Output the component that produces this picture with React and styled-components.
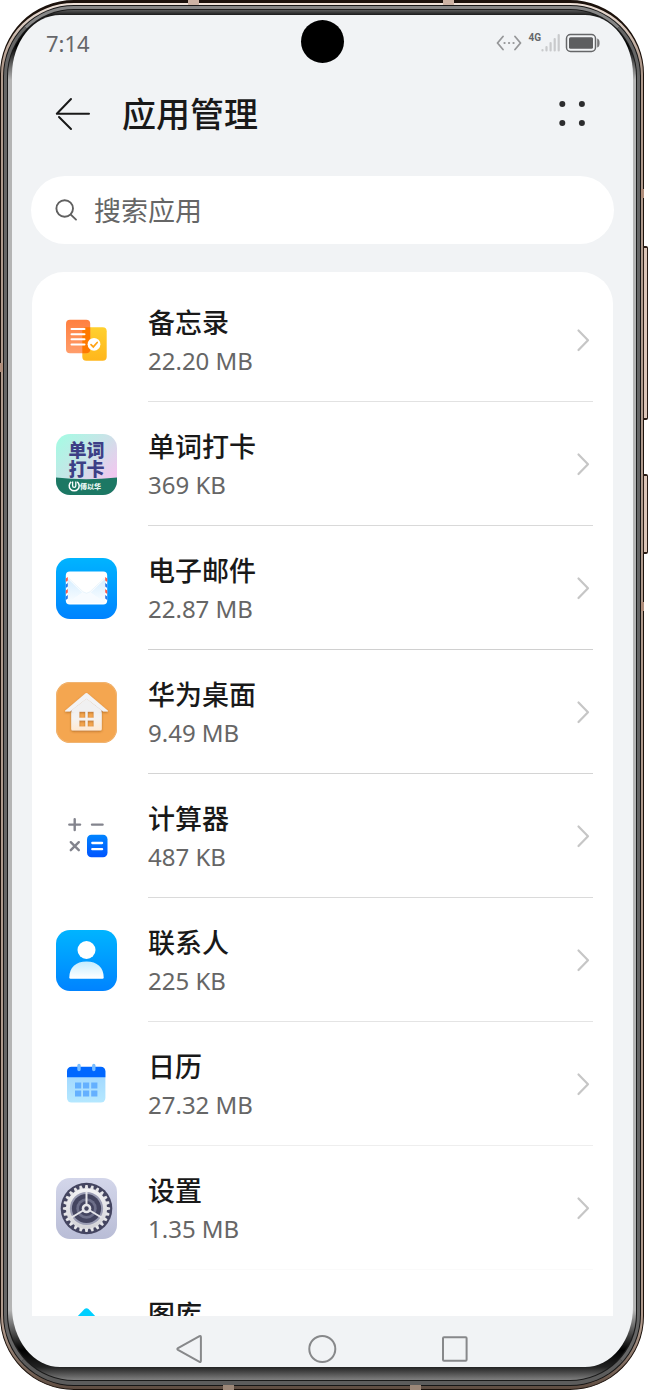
import React, {useState} from 'react'
import styled, {createGlobalStyle} from 'styled-components'

const teeth = Array.from({length: 24}, (_, i) => i * 15);

const MemoIcon = () => (
  <AppSvg viewBox="0 0 61 61" aria-hidden="true">
    <defs>
      <linearGradient id="memoOrange" x1="0" y1="0" x2="0" y2="1">
        <stop offset="0" stopColor="#ff7f3f"/><stop offset="1" stopColor="#ff9d6b"/>
      </linearGradient>
      <linearGradient id="memoYellow" x1="0" y1="0" x2="0" y2="1">
        <stop offset="0" stopColor="#ffd02e"/><stop offset="1" stopColor="#ffb61c"/>
      </linearGradient>
    </defs>
    <rect x="26.3" y="17.3" width="24.4" height="33.4" rx="4" fill="url(#memoYellow)"/>
    <rect x="10" y="9.8" width="24.2" height="33.4" rx="4" fill="url(#memoOrange)"/>
    <path d="M26.3 21.3a4 4 0 0 1 4-4h3.9v21.9a4 4 0 0 1-4 4h-3.9z" fill="#ff7900"/>
    <path d="M15.5 19h13M15.5 24.2h13M15.5 29.2h13M15.5 34.4h13" stroke="#fff" strokeWidth="2" strokeLinecap="round"/>
    <circle cx="38" cy="34.3" r="6.4" fill="#fff"/>
    <path d="M35 34.6l2.3 2.3 3.9-4.4" fill="none" stroke="#ffa314" strokeWidth="1.7" strokeLinecap="round"/>
  </AppSvg>
)

const WordIcon = () => (
  <AppSvg viewBox="0 0 61 61" aria-hidden="true">
    <defs>
      <linearGradient id="wordBg" x1="0" y1="0" x2="1" y2="0.9">
        <stop offset="0" stopColor="#a2fde3"/><stop offset="0.5" stopColor="#cbe2e8"/><stop offset="0.85" stopColor="#f0c8ef"/>
      </linearGradient>
      <clipPath id="wordClip"><rect width="61" height="61" rx="14"/></clipPath>
    </defs>
    <g clipPath="url(#wordClip)">
      <rect width="61" height="61" fill="url(#wordBg)"/>
      <path d="M0 43.5Q30 47 61 43.5V61H0z" fill="#1c7864"/>
      <WordText x="30.5" y="22.500" $size={18}>单词</WordText>
      <WordText x="30.5" y="41.500" $size={18}>打卡</WordText>
      <path d="M15.2 47.8a5 5 0 1 0 6 0" fill="none" stroke="#fff" strokeWidth="1.5"/>
      <path d="M16.6 47.5v4.2a1.6 1.6 0 0 0 3.2 0v-4.2" fill="none" stroke="#fff" strokeWidth="1.3"/>
      <WordText x="34.5" y="55" $size={7} $light>傅以华</WordText>
    </g>
  </AppSvg>
)

const MailIcon = () => (
  <AppSvg viewBox="0 0 61 61" aria-hidden="true">
    <defs>
      <linearGradient id="mailBg" x1="0" y1="0" x2="0" y2="1">
        <stop offset="0" stopColor="#00b4ff"/><stop offset="1" stopColor="#0083ff"/>
      </linearGradient>
      <linearGradient id="mailSide" x1="0" y1="0" x2="0" y2="1">
        <stop offset="0" stopColor="#d5edff"/><stop offset="1" stopColor="#fafdff"/>
      </linearGradient>
    </defs>
    <rect width="61" height="61" rx="14" fill="url(#mailBg)"/>
    <rect x="9.8" y="13.5" width="41.4" height="33" rx="4" fill="#fff"/>
    <path d="M11 20l15.5 14.5L12 45zM50 20L34.5 34.5 49 45z" fill="url(#mailSide)"/>
    <path d="M12 45l15-11h7l15 11z" fill="#f7fbff"/>
    <path d="M11 17.5l16 16.3q3.5 2.8 7 0l16-16.3V15H11z" fill="#fff"/>
    <path d="M12.5 20l14.5 13.8q3.5 2.8 7 0L48.5 20" fill="none" stroke="#dceefa" strokeWidth="0.6"/>
    <path d="M9.8 20.5l2-1.5v3.500l-2 1.500zM9.800 32.500l2-1.500v3.500l-2 1.500zM51.200 20.500l-2-1.500v3.500l2 1.500zM51.200 32.500l-2-1.500v3.500l2 1.500z" fill="#fa5a4c"/>
    <path d="M9.800 26.500l2-1.500v3.500l-2 1.500zM9.800 38.500l2-1.500v3.500l-2 1.500zM51.200 26.500l-2-1.500v3.500l2 1.500zM51.200 38.500l-2-1.500v3.500l2 1.500z" fill="#2878e8"/>
  </AppSvg>
)

const HomeIcon = () => (
  <AppSvg viewBox="0 0 61 61" aria-hidden="true">
    <defs>
      <linearGradient id="homeFace" x1="0" y1="0" x2="0" y2="1">
        <stop offset="0" stopColor="#eeeeef"/><stop offset="0.5" stopColor="#f4f2f1"/><stop offset="1" stopColor="#ffe9d2"/>
      </linearGradient>
      <filter id="homeShade" x="-20%" y="-20%" width="140%" height="150%">
        <feDropShadow dx="0" dy="1" stdDeviation="0.8" floodColor="#8a4a10" floodOpacity="0.6"/>
      </filter>
    </defs>
    <rect width="61" height="61" rx="14" fill="#f4a650"/>
    <rect x="0.5" y="0.5" width="60" height="60" rx="13.5" fill="none" stroke="#f0b472"/>
    <path filter="url(#homeShade)" fill="url(#homeFace)" fillRule="evenodd" d="M15.2 24h30.600v23a1.500 1.500 0 0 1-1.500 1.500H16.700a1.500 1.500 0 0 1-1.500-1.500zM23.300 29.800v6h6v-6zM31.700 29.800v6h6v-6zM23.300 38.500v6h6v-6zM31.700 38.500v6h6v-6z"/>
    <path filter="url(#homeShade)" fill="#f3f3f4" d="M29.600 11.300q.9-.8 1.800 0L52 28.700q.5.800-.5.800h-4.300L30.500 16.800 14 29.500H9.500q-1 0-.5-.8z"/>
    <path fill="#f0f0f1" d="M30.500 16.500L16 28v2h7v-1h15v1h7v-2z"/>
  </AppSvg>
)

const CalculatorIcon = () => (
  <AppSvg viewBox="0 0 61 61" aria-hidden="true">
    <defs>
      <linearGradient id="calcKey" x1="0" y1="0" x2="0" y2="1">
        <stop offset="0" stopColor="#0084ff"/><stop offset="1" stopColor="#0054ff"/>
      </linearGradient>
    </defs>
    <path d="M18.7 13.2v10.8M13.3 18.6h10.8M36 18.6h10.6M14.8 36.200l8 8M22.800 36.200l-8 8" stroke="#83848d" strokeWidth="2.4" strokeLinecap="round"/>
    <rect x="31" y="28.8" width="20.5" height="22.4" rx="4.5" fill="url(#calcKey)"/>
    <path d="M36.3 37h9.8M36.3 43.2h9.8" stroke="#fff" strokeWidth="2.3" strokeLinecap="round"/>
  </AppSvg>
)

const ContactsIcon = () => (
  <AppSvg viewBox="0 0 61 61" aria-hidden="true">
    <defs>
      <linearGradient id="contactBody" x1="0" y1="0" x2="0" y2="1">
        <stop offset="0" stopColor="#c4ecff"/><stop offset="1" stopColor="#fff"/>
      </linearGradient>
      <linearGradient id="contactBg" x1="0" y1="0" x2="0" y2="1">
        <stop offset="0" stopColor="#00b4ff"/><stop offset="1" stopColor="#0083ff"/>
      </linearGradient>
    </defs>
    <rect width="61" height="61" rx="14" fill="url(#contactBg)"/>
    <circle cx="30.5" cy="20" r="9" fill="#fff"/>
    <path d="M13.3 47.5c0-10 6.500-16 17.200-16s17.200 6 17.200 16q0 1.200-1.200 1.200h-32q-1.200 0-1.200-1.200z" fill="url(#contactBody)"/>
  </AppSvg>
)

const CalendarIcon = () => (
  <AppSvg viewBox="0 0 61 61" aria-hidden="true">
    <defs>
      <linearGradient id="calPage" x1="0" y1="0" x2="0" y2="1">
        <stop offset="0" stopColor="#9cd3ff"/><stop offset="1" stopColor="#b5e8ff"/>
      </linearGradient>
    </defs>
    <rect x="11" y="13" width="38.4" height="35.5" rx="4.5" fill="url(#calPage)"/>
    <path d="M11 23.3v-6a4.500 4.500 0 0 1 4.500-4.500h29.400a4.500 4.500 0 0 1 4.500 4.500v6z" fill="#0067ff"/>
    <path d="M23 11.500v4M37.800 11.500v4" stroke="#79bdff" strokeWidth="3.4" strokeLinecap="round"/>
    <path d="M19 28.500h6.200v6H19zM27 28.500h6.200v6H27zM35.200 28.500h6.200v6h-6.200zM19 36.500h6.200v6H19zM27 36.500h6.200v6H27zM35.200 36.500h6.200v6h-6.200z" fill="#64b0ff"/>
  </AppSvg>
)

const SettingsIcon = () => (
  <AppSvg viewBox="0 0 61 61" aria-hidden="true">
    <defs>
      <linearGradient id="setBg" x1="0" y1="0" x2="0" y2="1">
        <stop offset="0" stopColor="#d3d6ea"/><stop offset="1" stopColor="#b9bdd6"/>
      </linearGradient>
      <linearGradient id="setGear" x1="0" y1="0" x2="0" y2="1">
        <stop offset="0" stopColor="#f4f4f6"/><stop offset="1" stopColor="#d2d2d6"/>
      </linearGradient>
    </defs>
    <rect width="61" height="61" rx="14" fill="url(#setBg)"/>
    <g transform="translate(30.5 30.5)">
      <circle r="25.8" fill="#444560"/>
      <circle r="20.6" fill="url(#setGear)"/>
      {teeth.map((angle) => (
        <path key={angle} d="M-1.8-20L-1.1-23.6H1.1L1.8-20z" fill="#e6e6e9" transform={`rotate(${angle})`}/>
      ))}
      <circle r="16.6" fill="#9a9cb3"/>
      <circle r="14.6" fill="#444560"/>
      <circle r="10.2" fill="#6d6f89"/>
      <circle r="7.5" fill="#444560"/>
      <path d="M0-17V0M0 0l-15 9M0 0l15 9" stroke="#e5e5e9" strokeWidth="2"/>
      <circle r="4.8" fill="#e5e5e9"/>
      <circle r="2.2" fill="#444560"/>
    </g>
  </AppSvg>
)

const GalleryIcon = () => (
  <AppSvg viewBox="0 0 61 61" aria-hidden="true">
    <path d="M28.500 7q2-1.700 4 0l9 9.500-11 11-11-11z" fill="#00cfff"/>
    <path d="M44 19.500l9 9q2 2 0 4l-9 9-11-11z" fill="#0a84ff"/>
    <path d="M17 19.500l-9 9q-2 2 0 4l9 9 11-11z" fill="#ffc423"/>
    <path d="M30.500 33.500l11 11-9 9q-2 2-4 0l-9-9z" fill="#ff5c4d"/>
  </AppSvg>
)

const apps = [
  {name: '备忘录', size: '22.20 MB', Icon: MemoIcon, line: '#e2e2e2'},
  {name: '单词打卡', size: '369 KB', Icon: WordIcon, line: '#d9d9d9'},
  {name: '电子邮件', size: '22.87 MB', Icon: MailIcon, line: '#d0d0d0'},
  {name: '华为桌面', size: '9.49 MB', Icon: HomeIcon, line: '#d4d4d4'},
  {name: '计算器', size: '487 KB', Icon: CalculatorIcon, line: '#dadada'},
  {name: '联系人', size: '225 KB', Icon: ContactsIcon, line: '#e4e4e4'},
  {name: '日历', size: '27.32 MB', Icon: CalendarIcon, line: '#eeeeee'},
  {name: '设置', size: '1.35 MB', Icon: SettingsIcon, line: '#fafafa'},
  {name: '图库', size: '', Icon: GalleryIcon, line: '#ffffff'},
];

const StatusIcons = () => (
  <StatusGroup>
    <svg width="26" height="18" viewBox="0 0 26 18" fill="none" stroke="#969799" strokeWidth="1.8" strokeLinecap="round" strokeLinejoin="round" aria-hidden="true">
      <path d="M7 2.500L1.500 9 7 15.500M19 2.500L24.500 9 19 15.500"/>
      <path d="M8.500 9h.1M13 9h.1M17.500 9h.1" strokeWidth="2.2"/>
    </svg>
    <Network>4G</Network>
    <svg width="20" height="20" viewBox="0 0 20 20" stroke="#c9cacc" strokeWidth="2.2" strokeLinecap="round" aria-hidden="true">
      <path d="M1.500 17v.5M5.500 14v3.500M9.600 10v7.500M13.700 6v11.500M17.700 2v15.500"/>
    </svg>
    <Battery width="36" height="20" viewBox="0 0 36 20" aria-hidden="true">
      <rect x="1.500" y="1.500" width="29" height="17" rx="4" fill="none" stroke="#656668" strokeWidth="1.5"/>
      <rect x="4" y="4.300" width="24" height="11.400" rx="1.500" fill="#5d5e60"/>
      <path d="M32.200 5.500q2.400.5 2.400 4.500t-2.400 4.500z" fill="#77787a"/>
    </Battery>
  </StatusGroup>
)

const App = () => {
  const [query, setQuery] = useState('');
  const shown = apps.filter((app) => app.name.includes(query.trim()));

  return (
    <>
    <GlobalStyle/>
      <Phone>
        <Shell>
          <Rim>
            <Band>
              <Glass>
                <Screen>
                  <Camera/>
                  <StatusBar>
                    <span>7:14</span>
                    <StatusIcons/>
                  </StatusBar>
                  <Header>
                    <IconButton aria-label="返回">
                      <svg width="36" height="36" viewBox="0 0 36 36" fill="none" stroke="#191919" strokeWidth="2" strokeLinecap="round" strokeLinejoin="round" aria-hidden="true">
                        <path d="M16 3L1.800 17.800H34M4 21L16 33"/>
                      </svg>
                    </IconButton>
                    <h1>应用管理</h1>
                    <IconButton aria-label="更多">
                      <svg width="36" height="36" viewBox="0 0 36 36" fill="#2c2c2e" aria-hidden="true">
                        <circle cx="8.300" cy="8" r="3"/><circle cx="27.900" cy="8" r="3"/>
                        <circle cx="8.300" cy="27" r="3"/><circle cx="27.900" cy="27" r="3"/>
                      </svg>
                    </IconButton>
                  </Header>
                  <Search>
                    <svg width="24" height="24" viewBox="0 0 24 24" fill="none" stroke="#606060" strokeWidth="1.900" strokeLinecap="round" aria-hidden="true">
                      <circle cx="9.700" cy="10.500" r="8.300"/><path d="M15.800 16.600l5.200 5"/>
                    </svg>
                    <input aria-label="搜索应用" placeholder="搜索应用" value={query} onChange={(e)=> setQuery(e.target.value)}/>
                  </Search>
                  <List>
                    {shown.map(({name, size, Icon, line}) => (
                      <li key={name}>
                        <Row href={`#${name}`}>
                          <Icon/>
                          <RowBody $line={line}>
                            <RowText>
                              <h2>{name}</h2>
                              <p>{size}</p>
                            </RowText>
                            <svg width="16" height="24" viewBox="0 0 16 24" fill="none" stroke="#c6c6c6" strokeWidth="2.200" strokeLinecap="round" strokeLinejoin="round" aria-hidden="true">
                              <path d="M3.500 2.500L13 12.200 3.500 22"/>
                            </svg>
                          </RowBody>
                        </Row>
                      </li>
                    ))}
                  </List>
                  <NavBar>
                    <NavButton aria-label="后退">
                      <svg width="30" height="30" viewBox="0 0 30 30"><path d="M3 14.200Q1.700 15 3 15.800L24.500 27.800q1.400.6 1.400-1V3.200q0-1.600-1.400-1z"/></svg>
                    </NavButton>
                    <NavButton aria-label="主屏幕">
                      <svg width="30" height="30" viewBox="0 0 30 30"><circle cx="14.300" cy="15" r="13"/></svg>
                    </NavButton>
                    <NavButton aria-label="最近任务">
                      <svg width="30" height="30" viewBox="0 0 30 30"><rect x="2" y="3.200" width="23.600" height="23.600" rx="1"/></svg>
                    </NavButton>
                  </NavBar>
                </Screen>
              </Glass>
            </Band>
          </Rim>
        </Shell>
        <SideKey $top={246} $height={174}/>
        <SideKey $top={474} $height={80}/>
        <Antenna style={{top: 0, left: '29%'}} $wide/>
        <Antenna style={{top: 0, right: '30%'}} $wide/>
        <Antenna style={{bottom: 0, right: '35%'}} $wide $dark/>
        <Antenna style={{bottom: 0, left: '34.4%'}} $wide $dark/>
        <Antenna style={{top: 363, left: 0}}/>
        <Antenna style={{top: 189, right: 4}}/>
        <Antenna style={{top: 602, right: 4}}/>
      </Phone>
    </>
  )
}

const GlobalStyle = createGlobalStyle`
  *{
    box-sizing: border-box;
  }
  body{
    margin: 0;
    background: white;
    font-family: 'Noto Sans', 'Noto Sans CJK SC', sans-serif;
    color: #191919;
  }
  h1, h2, p, ul{
    margin: 0;
    padding: 0;
  }
  button{
    padding: 0;
    border: none;
    background: none;
    cursor: pointer;
  }
  svg{
    display: block;
    flex-shrink: 0;
  }
`
const Phone = styled.main`
  position: relative;
  height: 100vh;
  padding-right: 4px;
`
/* the metal edge, drawn as nested rounded layers */
const Shell = styled.div`
  height: 100%;
  padding: 2px 2px 3px;
  border: 1px solid #1c120c;
  border-top-width: 3px;
  border-radius: 74px;
  background: linear-gradient(#efe2d9, #b09a8c 60px, #b09a8c calc(100% - 60px), #5e4c41);
`
const Rim = styled.div`
  height: 100%;
  padding: 1px;
  border-radius: 71px;
  background: #161616;
`
const Band = styled.div`
  height: 100%;
  border-style: solid;
  border-width: 3px 3px 4px;
  border-color: #868686 #666 #5c5c5c;
  border-radius: 70px;
  background: #1a1a1a;
  padding: 1px;
`
const Glass = styled.div`
  height: 100%;
  padding: 5px 3px 13px 4px;
  border-radius: 66px;
  background: linear-gradient(#5a5a5a, #1a1a1a 5px, #000 36px, #b4b4b4 70px, #b4b4b4 calc(100% - 70px), #000 calc(100% - 30px), #222 calc(100% - 13px), #808080);
`
const Screen = styled.div`
  position: relative;
  display: flex;
  flex-direction: column;
  height: 100%;
  overflow: hidden;
  border-radius: 48px / 60px;
  background: #f1f3f5;
`
const Camera = styled.div`
  position: absolute;
  top: 5px;
  left: 50%;
  width: 43px;
  height: 43px;
  margin-left: -22px;
  border-radius: 50%;
  background: black;
`
const SideKey = styled.div`
  position: absolute;
  right: 0;
  top: ${(props) => props.$top}px;
  width: 5px;
  height: ${(props) => props.$height}px;
  border: 1px solid #2a1c15;
  border-width: 2px 1px;
  border-radius: 0 2px 2px 0;
  background: #dcc5b8;
`
const Antenna = styled.div`
  position: absolute;
  width: ${(props) => props.$wide ? '11px' : '3px'};
  height: ${(props) => props.$wide ? '5px' : '9px'};
  background: ${(props) => props.$dark ? '#9c8778' : props.$wide ? '#cdb3a4' : '#b08e7b'};
`
const StatusBar = styled.div`
  display: flex;
  align-items: center;
  justify-content: space-between;
  flex-shrink: 0;
  height: 56px;
  padding: 0 32px 0 34px;
  font-size: 22px;
  color: #66676a;
`
const StatusGroup = styled.div`
  display: flex;
  align-items: center;
`
const Network = styled.span`
  align-self: flex-start;
  margin-left: 6px;
  font-family: Roboto, sans-serif;
  font-size: 10px;
  font-weight: 700;
  line-height: 10px;
`
const Battery = styled.svg`
  margin-left: 4px;
`
const Header = styled.header`
  display: flex;
  align-items: center;
  flex-shrink: 0;
  height: 86px;
  margin-bottom: 19px;
  padding: 0 43px;
  h1{
    flex: 1;
    margin-left: 31px;
    font-size: 34px;
    font-weight: 500;
    line-height: 44px;
  }
`
const IconButton = styled.button`
  width: 36px;
  height: 36px;
`
const Search = styled.label`
  display: flex;
  align-items: center;
  gap: 15px;
  flex-shrink: 0;
  height: 68px;
  margin: 0 19px 28px;
  padding: 0 24px;
  border-radius: 34px;
  background: white;
  input{
    flex: 1;
    min-width: 0;
    padding: 0;
    border: none;
    outline: none;
    background: none;
    font: inherit;
    font-size: 27px;
    color: #191919;
  }
  input::placeholder{
    color: #666;
    opacity: 1;
  }
`
const List = styled.ul`
  flex: 1;
  min-height: 0;
  margin: 0 20px;
  padding: 6px 20px 0 24px;
  overflow-y: auto;
  scrollbar-width: none;
  list-style: none;
  border-radius: 32px 32px 0 0;
  background: white;
`
const Row = styled.a`
  display: flex;
  align-items: center;
  gap: 31px;
  height: 124px;
  color: inherit;
  text-decoration: none;
`
const RowBody = styled.div`
  display: flex;
  align-items: center;
  justify-content: space-between;
  flex: 1;
  height: 100%;
  padding-right: 2px;
  border-bottom: 1px solid ${(props) => props.$line};
`
const RowText = styled.div`
  padding-top: 4px;
  h2{
    font-size: 27px;
    font-weight: 500;
    line-height: 38px;
  }
  p{
    min-height: 38px;
    font-size: 24px;
    line-height: 38px;
    color: #666;
  }
`
const AppSvg = styled.svg`
  width: 61px;
  height: 61px;
`
const WordText = styled.text`
  font-family: 'Noto Sans CJK SC', sans-serif;
  font-size: ${(props) => props.$size}px;
  font-weight: 900;
  text-anchor: middle;
  fill: ${(props) => props.$light ? '#e8f5f1' : '#3d3f86'};
`
const NavBar = styled.nav`
  display: flex;
  justify-content: center;
  align-items: flex-start;
  gap: 103px;
  flex-shrink: 0;
  height: 51px;
  padding-top: 18px;
`
const NavButton = styled.button`
  svg{
    fill: none;
    stroke: #87888a;
    stroke-width: 2;
  }
`

export default App
